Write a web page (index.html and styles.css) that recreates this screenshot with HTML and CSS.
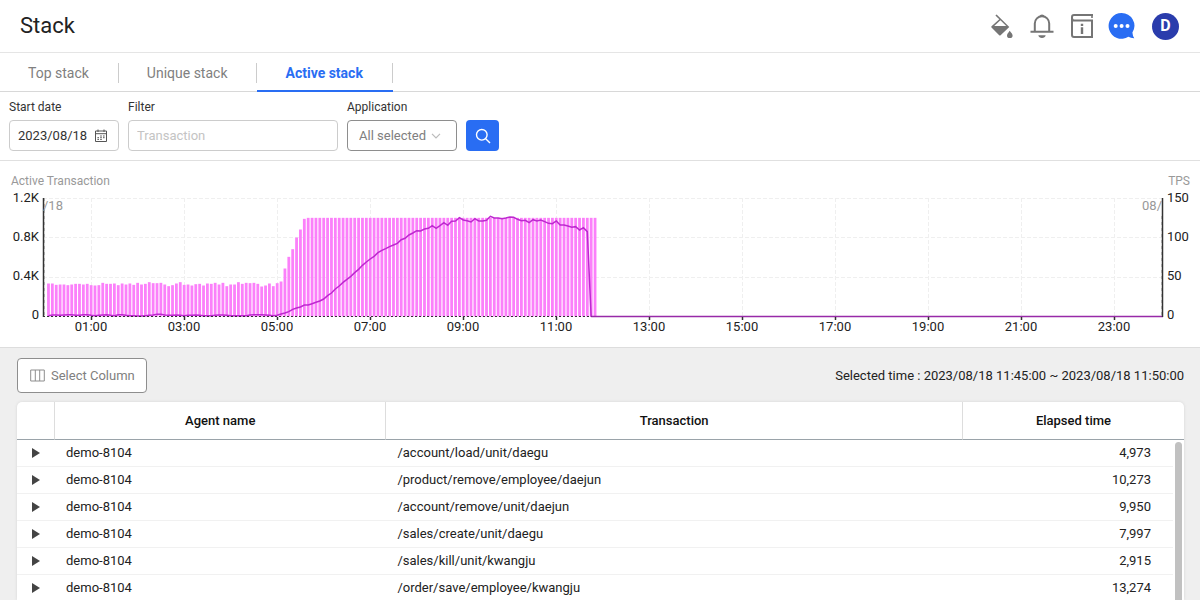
FILE: index.html
```html
<!DOCTYPE html>
<html lang="en">
<head>
<meta charset="utf-8">
<meta name="viewport" content="width=device-width, initial-scale=1">
<title>Stack</title>
<link rel="stylesheet" href="styles.css">
</head>
<body>
<div class="page">
  <header class="header">
    <h1 class="title">Stack</h1>
    <div class="actions">
      <button class="icon-btn" type="button" aria-label="Theme">
        <svg width="28" height="28" viewBox="0 0 28 28"><path d="M8.6 2.6 L21.3 15 L12.6 23.2 Q11.9 23.8 11.2 23.2 L3.5 15.6 Q2.9 14.9 3.5 14.2 L11.3 7.2 L7.4 3.6 Z" fill="#757575"/><path d="M6.2 14 L12.4 8.3 L18.3 14 Z" fill="#fff"/><path d="M21.7 18.8 C23.2 20.8 24.6 22.1 24.6 23.5 A2.8 2.6 0 0 1 19 23.5 C19 22.1 20.3 20.8 21.7 18.8 Z" fill="#757575"/></svg>
      </button>
      <button class="icon-btn" type="button" aria-label="Notifications">
        <svg width="28" height="28" viewBox="0 0 28 28" fill="none" stroke="#757575" stroke-width="2"><path d="M2.5 19.7 H25.5 M6.8 19.5 V11.5 A7.2 7.2 0 0 1 21.2 11.5 V19.5"/><path d="M11.3 4.5 A2.8 2.8 0 0 1 16.7 4.5 Z M10.3 23.3 H17.7 A3.8 3.6 0 0 1 10.3 23.3 Z" fill="#757575" stroke="none"/></svg>
      </button>
      <button class="icon-btn" type="button" aria-label="Information">
        <svg width="28" height="28" viewBox="0 0 28 28" fill="none" stroke="#757575" stroke-width="2"><path d="M25 3 H6 Q4 3 4 5 V23 Q4 25 6 25 H24 V8.5 H6.5 Q4 8.5 4 6"/><path d="M24 3 V6" stroke-width="1.6"/><path d="M12.8 11.8 H15.2 V14 H12.8 Z M12.8 15.3 H15.2 V22 H12.8 Z" fill="#757575" stroke="none"/></svg>
      </button>
      <button class="icon-btn" type="button" aria-label="Chat">
        <svg width="28" height="28" viewBox="0 0 28 28"><path d="M13.5 1 A12.8 12.8 0 0 1 24.4 20.6 Q24.6 24 26.3 26.2 Q23 26.3 20.4 24.8 A12.9 12.9 0 1 1 13.5 1 Z" fill="#296df3"/><g fill="#fff"><circle cx="7.7" cy="14" r="2"/><circle cx="13.6" cy="14" r="2"/><circle cx="19.5" cy="14" r="2"/></g></svg>
      </button>
      <button class="avatar" type="button" aria-label="Account D">D</button>
    </div>
  </header>

  <nav class="tabs">
    <a class="tab" href="#top">Top stack</a>
    <a class="tab" href="#unique">Unique stack</a>
    <a class="tab tab-active" href="#active" aria-current="page">Active stack</a>
  </nav>

  <form class="filters">
    <div class="field">
      <label for="date">Start date</label>
      <div class="control date">
        <input id="date" type="text" value="2023/08/18">
        <svg class="calendar" width="14" height="14" viewBox="0 0 14 14" fill="none" stroke="#555"><path d="M1.5 2 H12.5 V12.5 H1.5 Z M1.5 4.7 H12.5 M4 0.5 V3 M10 0.5 V3"/><path d="M6.2 7 H7.8 M9 7 H10.6 M3.4 8.7 H5 M6.2 8.7 H7.8 M9 8.7 H10.6 M3.4 10.4 H5 M6.2 10.4 H7.8"/></svg>
      </div>
    </div>
    <div class="field">
      <label for="filter">Filter</label>
      <input class="control filter" id="filter" type="text" placeholder="Transaction">
    </div>
    <div class="field">
      <label for="app">Application</label>
      <div class="select-wrap">
        <select class="control app" id="app"><option>All selected</option></select>
        <svg class="chevron" width="10" height="8" viewBox="0 0 10 8" fill="none" stroke="#bbb" stroke-width="1.2"><path d="M1 1.8 L5 5.8 L9 1.8"/></svg>
      </div>
    </div>
    <button class="search" type="submit" aria-label="Search">
      <svg width="16" height="16" viewBox="0 0 16 16" fill="none" stroke="#fff" stroke-width="1.4"><circle cx="6.8" cy="6.8" r="5.3"/><path d="M10.7 10.7 L15 15"/></svg>
    </button>
  </form>

  <section class="chart-panel">
    <div class="chart-titles"><span>Active Transaction</span><span>TPS</span></div>
    <svg class="chart" id="chart" role="img" aria-label="Active transactions and TPS"></svg>
  </section>

  <main class="results">
    <div class="toolbar">
      <button class="column-btn" type="button">
        <svg width="15" height="13" viewBox="0 0 15 13" fill="none" stroke="#8e8e8e"><path d="M0.7 1 H14.3 V12 H0.7 Z M5.3 1 V12 M9.7 1 V12"/></svg>
        Select Column
      </button>
      <p class="selected-time">Selected time : 2023/08/18 11:45:00 ~ 2023/08/18 11:50:00</p>
    </div>
    <div class="table-card">
      <table class="table">
        <colgroup><col class="col-toggle"><col class="col-agent"><col class="col-transaction"><col></colgroup>
        <thead><tr><th></th><th>Agent name</th><th>Transaction</th><th>Elapsed time</th></tr></thead>
        <tbody>
          <tr><td><button class="toggle" type="button" aria-label="Expand"></button></td><td>demo-8104</td><td>/account/load/unit/daegu</td><td class="num">4,973</td></tr>
          <tr><td><button class="toggle" type="button" aria-label="Expand"></button></td><td>demo-8104</td><td>/product/remove/employee/daejun</td><td class="num">10,273</td></tr>
          <tr><td><button class="toggle" type="button" aria-label="Expand"></button></td><td>demo-8104</td><td>/account/remove/unit/daejun</td><td class="num">9,950</td></tr>
          <tr><td><button class="toggle" type="button" aria-label="Expand"></button></td><td>demo-8104</td><td>/sales/create/unit/daegu</td><td class="num">7,997</td></tr>
          <tr><td><button class="toggle" type="button" aria-label="Expand"></button></td><td>demo-8104</td><td>/sales/kill/unit/kwangju</td><td class="num">2,915</td></tr>
          <tr><td><button class="toggle" type="button" aria-label="Expand"></button></td><td>demo-8104</td><td>/order/save/employee/kwangju</td><td class="num">13,274</td></tr>
        </tbody>
      </table>
      <div class="scrollbar"><div class="thumb"></div></div>
    </div>
  </main>
</div>
<script src="chart.js"></script>
</body>
</html>
```
FILE: styles.css
```css
* { box-sizing: border-box; }

body {
  margin: 0;
  font-family: Roboto, "Liberation Sans", sans-serif;
  font-size: 13px;
  line-height: 20px;
  color: #222;
  background: #fff;
}

button, input, select { font: inherit; }
button { padding: 0; border: 0; background: none; cursor: pointer; }

.page {
  display: flex;
  flex-direction: column;
  height: 100vh;
  overflow: hidden;
}

.header {
  display: flex;
  flex: none;
  align-items: center;
  justify-content: space-between;
  height: 53px;
  padding: 0 21px 0 20px;
  border-bottom: 1px solid #e5e5e5;
}
.title { margin: 0; font-size: 22px; font-weight: 400; line-height: 32px; }
.actions { display: flex; align-items: center; gap: 12px; }
.icon-btn { width: 28px; height: 28px; }
.icon-btn svg { display: block; }
.avatar {
  width: 27px;
  height: 27px;
  margin-left: 4px;
  border-radius: 50%;
  background: #2a3cac;
  color: #fff;
  font-size: 16px;
  font-weight: 700;
}

.tabs {
  display: flex;
  flex: none;
  height: 39px;
  border-bottom: 1px solid #d8d8d8;
  font-size: 14px;
}
.tab {
  position: relative;
  height: 39px;
  padding: 0 30px 0 28px;
  line-height: 40px;
  color: #808080;
  text-decoration: none;
}
.tab::after {
  content: "";
  position: absolute;
  top: 10px;
  right: 0;
  width: 1px;
  height: 20px;
  background: #ccc;
}
.tab-active {
  color: #296df3;
  font-weight: 700;
  border-bottom: 2px solid #296df3;
}

.filters {
  display: flex;
  flex: none;
  align-items: flex-end;
  gap: 9px;
  padding: 5px 9px 9px;
  border-bottom: 1px solid #e0e0e0;
}
.field { display: flex; flex-direction: column; gap: 3px; }
.field label { font-size: 12px; color: #333; }
.control {
  height: 31px;
  border: 1px solid #ccc;
  border-radius: 4px;
  background: #fff;
}
.date { display: flex; align-items: center; width: 110px; padding: 0 10px 0 8px; }
.date input { flex: 1; min-width: 0; padding: 0; border: 0; color: #333; }
.calendar { flex: none; }
.filter { width: 210px; padding: 0 8px; }
.filter::placeholder { color: #c4c4c4; }
.select-wrap { position: relative; }
.app {
  display: block;
  width: 110px;
  padding: 0 11px;
  border-color: #8e8e8e;
  color: #808080;
  appearance: none;
}
.chevron { position: absolute; top: 12px; right: 16px; pointer-events: none; }
.search {
  display: grid;
  place-items: center;
  width: 33px;
  height: 31px;
  border-radius: 4px;
  background: #296df3;
}

.chart-panel { flex: none; padding: 10px 0 0; border-bottom: 1px solid #ddd; }
.chart-titles {
  display: flex;
  justify-content: space-between;
  padding: 0 10px 0 11px;
  font-size: 12px;
  color: #999;
}
.chart { display: block; width: 100%; height: 156px; font-size: 13px; }
.grid { stroke: #efefef; stroke-dasharray: 4 2; }
.day { stroke: #ccc; stroke-dasharray: 3 3; }
.axis { stroke: #333; stroke-width: 1.5; }
.base { stroke: #333; stroke-dasharray: 2 2; }
.bar { fill: #fb80fa; }
.line { fill: none; stroke: #bd29cf; stroke-width: 1.5; }
.rest { stroke: #982aa8; stroke-width: 1.5; }
.label { fill: #222; }
.day-label { fill: #999; }

.results {
  display: flex;
  flex: 1;
  flex-direction: column;
  min-height: 0;
  padding: 10px 16px 0 17px;
  background: #efefef;
}
.toolbar {
  display: flex;
  flex: none;
  align-items: center;
  justify-content: space-between;
  margin-bottom: 9px;
}
.column-btn {
  display: flex;
  align-items: center;
  gap: 6px;
  height: 35px;
  padding: 0 11px 0 12px;
  border: 1px solid #8e8e8e;
  border-radius: 4px;
  background: #fff;
  color: #808080;
}
.selected-time { margin: 0; }

.table-card {
  position: relative;
  flex: 1;
  min-height: 0;
  overflow: hidden;
  border-radius: 5px 5px 0 0;
  background: #fff;
  box-shadow: 0 0 3px #d5d5d5;
}
.table {
  width: 100%;
  table-layout: fixed;
  border-collapse: separate;
  border-spacing: 0;
}
.col-toggle { width: 38px; }
.col-agent { width: 28.4%; }
.col-transaction { width: 49.4%; }
.table th {
  height: 38px;
  padding: 0;
  border-bottom: 1px solid #9aa3a9;
  border-right: 1px solid #ddd;
  color: #111;
  font-weight: 500;
}
.table th:last-child { border-right: 0; }
.table td {
  height: 27px;
  padding: 0 11px;
  border-bottom: 1px solid #f1f1f1;
}
.table td:first-child { padding: 0 0 0 15px; }
.table .num { padding-right: 33px; text-align: right; }
.toggle {
  display: block;
  border-top: 5px solid transparent;
  border-bottom: 5px solid transparent;
  border-left: 8px solid #444;
}
.scrollbar {
  position: absolute;
  top: 38px;
  right: 0;
  bottom: 0;
  width: 11px;
  padding: 2px 2px 0;
  background: #fff;
}
.thumb { height: 100%; border-radius: 4px 4px 0 0; background: #c1c1c1; }
```
FILE: chart.js
```js
const svg = document.getElementById("chart");
const NS = "http://www.w3.org/2000/svg";

// One value per five minutes, as heights in thirds of a pixel.
const bars = [
  99, 99, 95, 96, 96, 94, 96, 98, 98, 96, 98, 94, 93, 94, 101, 98, 98, 99, 94, 99,
  96, 99, 95, 101, 96, 98, 103, 100, 100, 101, 96, 91, 94, 99, 103, 95, 96, 93, 97, 98,
  93, 99, 98, 101, 96, 101, 91, 96, 96, 103, 98, 101, 100, 101, 98, 90, 93, 99, 91, 100,
  105, 144, 179, 202, 237, 261, 293
];
while (bars.length < 142) bars.push(296);

const tps = [
  4, 6, 6, 5, 6, 7, 7, 5, 5, 7, 7, 5, 4, 5, 6, 7, 5, 4, 7, 7,
  5, 4, 4, 3, 3, 4, 5, 6, 8, 8, 6, 5, 5, 6, 5, 4, 5, 5, 6, 5,
  4, 4, 4, 5, 6, 6, 5, 4, 4, 4, 4, 4, 6, 7, 7, 7, 6, 5, 4, 5,
  9, 12, 16, 23, 27, 30, 36, 36, 40, 44, 48, 54, 64, 72, 84, 93, 104, 113, 122, 133,
  143, 155, 165, 174, 182, 193, 200, 205, 211, 216, 221, 232, 236, 246, 252, 259, 258, 264, 266, 274,
  266, 274, 283, 275, 287, 288, 298, 291, 289, 285, 295, 288, 288, 290, 302, 297, 297, 295, 297, 300,
  299, 293, 289, 290, 283, 292, 288, 291, 286, 281, 280, 288, 276, 276, 273, 269, 271, 261, 268, 256, 0
];

function add(name, attrs, text) {
  const node = document.createElementNS(NS, name);
  for (const key in attrs) node.setAttribute(key, attrs[key]);
  if (text) node.textContent = text;
  svg.appendChild(node);
}

function line(cls, x1, y1, x2, y2) {
  add("line", { class: cls, x1, y1, x2, y2 });
}

function draw() {
  svg.replaceChildren();
  const width = svg.clientWidth;
  const left = 43, right = width - 37;
  const top = 7, bottom = 125;
  const start = left + 1.6;
  const hour = (right - 2 - start) / 24;

  [0, 1, 2].forEach(i => {
    const y = Math.round(top + i * 118 / 3) + 0.5;
    line("grid", left, y, right, y);
  });
  for (let h = 1; h < 24; h += 2) {
    const x = Math.round(start + h * hour) + 0.5;
    line("grid", x, top, x, bottom);
  }
  line("day", left + 1.5, top, left + 1.5, bottom);
  line("day", right - 1.5, top + 18, right - 1.5, bottom);

  bars.forEach((v, i) => {
    add("rect", { class: "bar", x: start + (i + 1) * hour / 12 - 1.4, y: bottom + 0.5 - v / 3, width: 2.8, height: v / 3 });
  });
  const points = tps.map((v, i) => (start + (i + 1) * hour / 12) + "," + (bottom + 1 - v / 3));
  add("polyline", { class: "line", points: points.join(" ") });

  line("base", left, bottom + 0.5, start + 11.8 * hour, bottom + 0.5);
  line("rest", start + 11.75 * hour, bottom + 0.5, right, bottom + 0.5);
  line("axis", left + 0.5, top, left + 0.5, bottom + 1);
  line("axis", right - 0.5, top, right - 0.5, bottom + 1);

  for (let h = 1; h < 24; h += 2) {
    const x = Math.round(start + h * hour);
    line("axis", x + 0.5, bottom + 1, x + 0.5, bottom + 4);
    add("text", { class: "label", x, y: 140, "text-anchor": "middle" }, String(h).padStart(2, "0") + ":00");
  }
  ["1.2K", "0.8K", "0.4K", "0"].forEach((t, i) => {
    add("text", { class: "label", x: left - 4, y: 11 + i * 39, "text-anchor": "end" }, t);
  });
  ["150", "100", "50", "0"].forEach((t, i) => {
    add("text", { class: "label", x: right + 4, y: 11 + i * 39 }, t);
  });
  add("text", { class: "day-label", x: left, y: 19 }, "/18");
  add("text", { class: "day-label", x: right - 1, y: 19, "text-anchor": "end" }, "08/");
}

draw();
window.addEventListener("resize", draw);
```
